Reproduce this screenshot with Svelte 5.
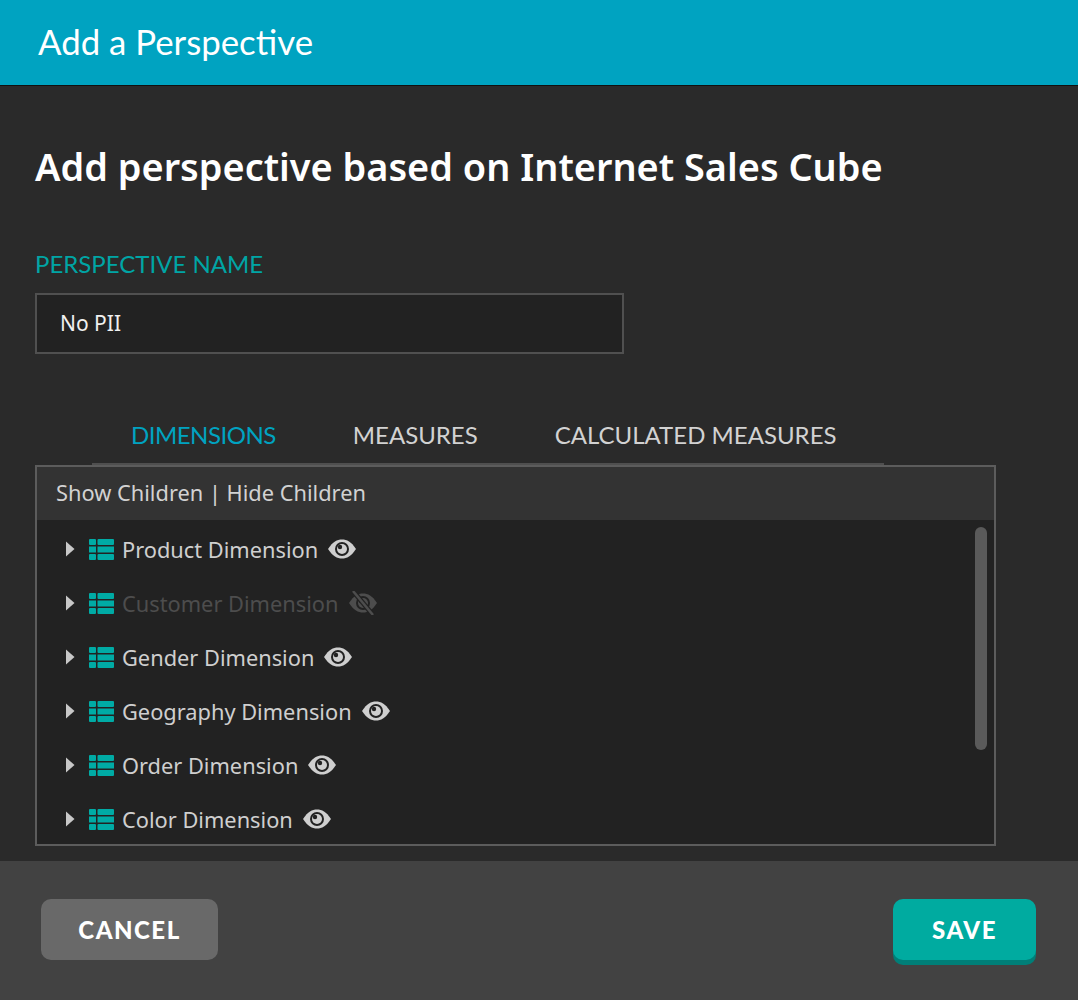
<script>
	const rows = [
		{ name: 'Product Dimension', hidden: false },
		{ name: 'Customer Dimension', hidden: true },
		{ name: 'Gender Dimension', hidden: false },
		{ name: 'Geography Dimension', hidden: false },
		{ name: 'Order Dimension', hidden: false },
		{ name: 'Color Dimension', hidden: false }
	];
	const tabs = ['DIMENSIONS', 'MEASURES', 'CALCULATED MEASURES'];
</script>

<div class="dialog">
	<header class="top">Add a Perspective</header>
	<main class="body">
		<h1>Add perspective based on Internet Sales Cube</h1>
		<div class="label">PERSPECTIVE NAME</div>
		<div class="input">No PII</div>
		<nav class="tabs">
			{#each tabs as tab, i}
				<span class="tab" class:active={i === 0}>{tab}</span>
			{/each}
		</nav>
		<section class="panel">
			<div class="toolbar">Show Children | Hide Children</div>
			<div class="list">
				<div class="thumb"></div>
				{#each rows as row}
					<div class="row" class:off={row.hidden}>
						<svg class="caret" width="10" height="16" viewBox="0 0 10 16"><path d="M1 0.5 L9.5 8 L1 15.5 Z" fill="#c8c8c8" /></svg>
						<svg class="grid" width="25" height="21" viewBox="0 0 25 21">
							<g fill="#00aba5">
								<rect x="0" y="0" width="7" height="6" rx="1" />
								<rect x="8.5" y="0" width="16.5" height="6" rx="1" />
								<rect x="0" y="7.5" width="7" height="6" />
								<rect x="8.5" y="7.5" width="16.5" height="6" />
								<rect x="0" y="15" width="7" height="6" rx="1" />
								<rect x="8.5" y="15" width="16.5" height="6" rx="1" />
							</g>
						</svg>
						<span class="name">{row.name}</span>
						<svg class="eye" width="30" height="24" viewBox="0 0 30 24">
							<path d="M1 12 C6 4.5 10 2.5 15 2.5 C20 2.5 24 4.5 29 12 C24 19.5 20 21.5 15 21.5 C10 21.5 6 19.5 1 12 Z" fill={row.hidden ? '#4d4d4d' : '#cfcfcf'} />
							<circle cx="15" cy="12" r="7" fill="#222" />
							<circle cx="15" cy="12" r="5" fill={row.hidden ? '#4d4d4d' : '#cfcfcf'} />
							<circle cx="13" cy="10" r="2.2" fill="#222" />
							{#if row.hidden}
								<path d="M5 0 L25 24" stroke="#222" stroke-width="5" />
								<path d="M5 0 L25 24" stroke="#4d4d4d" stroke-width="2.5" />
							{/if}
						</svg>
					</div>
				{/each}
			</div>
		</section>
	</main>
	<footer class="foot">
		<button class="btn cancel">CANCEL</button>
		<button class="btn save">SAVE</button>
	</footer>
</div>

<style>
	:global(body) {
		background: #2a2a2a;
	}
	.dialog {
		display: flex;
		flex-direction: column;
		height: 1000px;
		background: #2a2a2a;
		font-family: 'Noto Sans', sans-serif;
	}
	.top {
		height: 64px;
		padding: 21px 38px 0;
		background: #00a3c1;
		border-bottom: 1px solid #111;
		color: #fff;
		font-family: Lato, sans-serif;
		font-size: 34.8px;
		line-height: 42px;
	}
	.body {
		flex: 1;
		padding: 0 35px;
	}
	h1 {
		margin: 55px 0 0;
		color: #fff;
		font-size: 37.9px;
		line-height: 50px;
		font-weight: 600;
		white-space: nowrap;
	}
	.label {
		margin-top: 58px;
		color: #00a5a5;
		font-family: Lato, sans-serif;
		font-size: 24px;
		line-height: 30px;
	}
	.input {
		box-sizing: border-box;
		width: 589px;
		height: 61px;
		margin-top: 14px;
		padding-left: 23px;
		border: 2px solid #505050;
		background: #222;
		color: #f0f0f0;
		font-size: 21px;
		line-height: 56px;
	}
	.tabs {
		display: flex;
		gap: 77px;
		box-sizing: border-box;
		width: 792px;
		height: 50px;
		margin: 61px 0 0 57px;
		padding-left: 39px;
		border-bottom: 2px solid #4f4f4f;
	}
	.tab {
		color: #d2d2d2;
		font-family: Lato, sans-serif;
		font-size: 24px;
		line-height: 40px;
		white-space: nowrap;
	}
	.tab.active {
		color: #00a3c1;
		letter-spacing: -0.5px;
	}
	.panel {
		box-sizing: border-box;
		width: 961px;
		height: 381px;
		border: 2px solid #5c5c5c;
		background: #222;
		overflow: hidden;
	}
	.toolbar {
		height: 53px;
		padding-left: 19px;
		background: #333;
		color: #d2d2d2;
		font-size: 21.8px;
		line-height: 52px;
	}
	.list {
		position: relative;
		padding: 2px 0 0 27px;
	}
	.thumb {
		position: absolute;
		top: 7px;
		right: 7px;
		width: 12px;
		height: 223px;
		border-radius: 6px;
		background: #5a5a5a;
	}
	.row {
		display: flex;
		align-items: center;
		height: 54px;
		color: #cfcfcf;
		font-size: 21.8px;
	}
	.row.off {
		color: #4d4d4d;
	}
	.caret {
		margin: 0 14px 0 1px;
	}
	.grid {
		margin-right: 8px;
	}
	.eye {
		margin-left: 9px;
	}
	.foot {
		display: flex;
		justify-content: space-between;
		height: 139px;
		box-sizing: border-box;
		padding: 38px 42px 0 41px;
		background: #424242;
	}
	.btn {
		height: 61px;
		border: 0;
		border-radius: 10px;
		color: #fff;
		font-family: Lato, sans-serif;
		font-size: 24px;
		font-weight: 900;
		letter-spacing: 1.5px;
	}
	.cancel {
		width: 177px;
		background: #696969;
	}
	.save {
		width: 143px;
		background: #00aba0;
		box-shadow: 0 5px 0 #007f78;
	}
</style>
